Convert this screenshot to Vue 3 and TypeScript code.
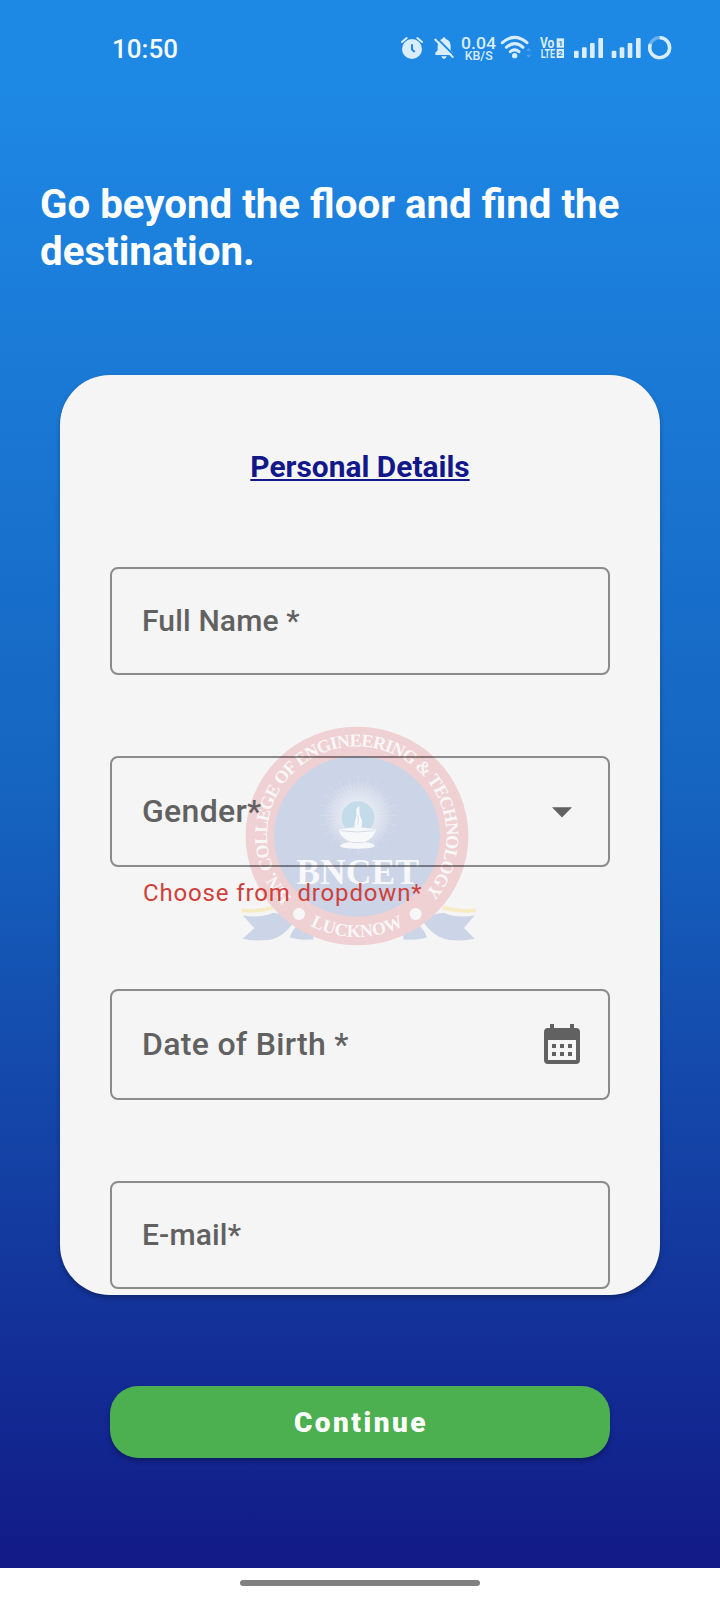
<script setup lang="ts">
interface Field {
  id: string
  label: string
  size: 'regular' | 'large'
  icon?: 'dropdown' | 'calendar'
  hint?: string
}

const fields: Field[] = [
  { id: 'name', label: 'Full Name *', size: 'regular' },
  { id: 'gender', label: 'Gender*', size: 'large', icon: 'dropdown', hint: 'Choose from dropdown*' },
  { id: 'birth', label: 'Date of Birth *', size: 'large', icon: 'calendar' },
  { id: 'email', label: 'E-mail*', size: 'regular' },
]

// Sunburst lines behind the lamp, alternating long and short.
const rays = Array.from({ length: 48 }, (_, i) => {
  const angle = (i / 48) * Math.PI * 2
  const outer = i % 2 ? 94 : 118
  return {
    x1: 415 + Math.cos(angle) * 52,
    y1: 346 + Math.sin(angle) * 52,
    x2: 415 + Math.cos(angle) * outer,
    y2: 346 + Math.sin(angle) * outer,
  }
})
</script>

<template>
  <div class="phone">
    <main class="screen">
      <header class="status">
        <span class="clock">10:50</span>
        <svg class="status-icons" viewBox="0 0 960 180" fill="#d9edff">
          <g>
            <circle cx="96" cy="87" r="30" />
            <path d="M66 66 L80 54 M126 66 L112 54" stroke="#d9edff" stroke-width="6" stroke-linecap="round" />
            <path d="M96 73 V88 L104 96" fill="none" stroke="#1e88e5" stroke-width="6" />
          </g>
          <g>
            <path d="M166 105 V98 L173 91 V78 Q173 60 187 57 Q187 52 192 52 Q197 52 197 57 Q212 61 212 78 V92 L219 99 V105 Z" />
            <path d="M184 109 H200 Q198 117 192 117 Q186 117 184 109Z" />
            <path d="M169 53 L225 109" stroke="#1e88e5" stroke-width="6" />
            <path d="M164 57 L220 113" stroke="#d9edff" stroke-width="6" />
          </g>
          <text x="243" y="87" class="speed" font-size="50" textLength="105" lengthAdjust="spacingAndGlyphs">0.04</text>
          <text x="254" y="121" class="speed" font-size="40" textLength="84" lengthAdjust="spacingAndGlyphs">KB/S</text>
          <g fill="none" stroke="#d9edff" stroke-width="9" stroke-linecap="round">
            <path d="M367 68 Q404 36 441 68" />
            <path d="M379 82 Q404 60 429 82" />
            <path d="M391 95 Q404 84 417 95" />
          </g>
          <circle cx="404" cy="107" r="8" />
          <path d="M438 93 L446 84 L454 93Z M438 104 L446 113 L454 104Z" opacity=".25" />
          <text x="480" y="84" class="volte" font-size="43" textLength="43" lengthAdjust="spacingAndGlyphs">Vo</text>
          <text x="482" y="115" class="volte" font-size="40" textLength="43" lengthAdjust="spacingAndGlyphs">LTE</text>
          <rect x="530" y="55" width="22" height="28" />
          <rect x="530" y="87" width="22" height="27" />
          <text x="535" y="78" class="sim" font-size="24">1</text>
          <text x="534" y="109" class="sim" font-size="24">2</text>
          <g>
            <rect x="582" y="92" width="14" height="22" rx="3" />
            <rect x="606" y="82" width="14" height="32" rx="3" />
            <rect x="630" y="69" width="14" height="45" rx="3" />
            <rect x="655" y="54" width="14" height="60" rx="3" />
            <rect x="695" y="92" width="14" height="22" rx="3" />
            <rect x="719" y="82" width="14" height="32" rx="3" />
            <rect x="743" y="69" width="14" height="45" rx="3" />
            <rect x="768" y="54" width="14" height="60" rx="3" />
          </g>
          <circle cx="839" cy="83" r="30" fill="none" stroke="#d9edff" stroke-width="10" opacity=".4" />
          <path d="M839 53 A30 30 0 1 1 811 72" fill="none" stroke="#d9edff" stroke-width="10" />
        </svg>
      </header>

      <h1 class="headline">Go beyond the floor and find the destination.</h1>

      <section class="card">
        <svg class="crest" viewBox="0 0 840 810">
          <defs>
            <path id="ring-top" d="M 215 593 A 269 269 0 1 1 612 586" />
            <path id="ring-bottom" d="M 210 635 A 303 303 0 0 0 612 635" />
            <radialGradient id="glow">
              <stop offset="0" stop-color="#fff" stop-opacity=".8" />
              <stop offset=".45" stop-color="#fff" stop-opacity=".45" />
              <stop offset="1" stop-color="#fff" stop-opacity="0" />
            </radialGradient>
          </defs>
          <g fill="#ccd5e7">
            <path d="M68 646 Q115 656 160 638 L232 650 Q190 722 130 721 Q95 723 68 716 L103 684 Z" />
            <path d="M764 646 Q715 656 670 638 L600 650 Q640 720 702 721 Q738 723 764 716 L732 684 Z" />
          </g>
          <g fill="#ccd5e7" stroke="#f4f4f4" stroke-width="4">
            <path d="M207 714 Q214 686 240 668 L282 690 V720 Q235 724 207 714Z" />
            <path d="M623 714 Q616 686 590 668 L548 690 V720 Q595 724 623 714Z" />
          </g>
          <path d="M64 631 Q110 636 160 623 M768 631 Q720 636 668 623" fill="none" stroke="#f7ebc4" stroke-width="11" />
          <ellipse cx="411" cy="408" rx="334" ry="328" fill="#efd0d3" />
          <ellipse cx="411" cy="409" rx="249" ry="241" fill="#ccd5e7" />
          <circle cx="415" cy="346" r="104" fill="url(#glow)" />
          <g stroke="#fff" stroke-width="1.5" opacity=".3">
            <line v-for="(r, i) in rays" :key="i" :x1="r.x1" :y1="r.y1" :x2="r.x2" :y2="r.y2" />
          </g>
          <circle cx="414" cy="353" r="49" fill="#c4dcea" />
          <g fill="#f7f8fa">
            <path d="M403 386 C403 360 412 350 409 335 C408 326 413 322 417 318 C420 332 416 342 423 355 C430 368 424 376 425 387 Z" />
            <path d="M356 389 Q412 374 468 389 Q462 416 431 427 Q460 428 465 438 Q458 446 412 446 Q366 446 359 438 Q366 428 394 427 Q362 414 356 389Z" />
          </g>
          <path d="M362 392 Q412 400 462 392 M413 374 Q418 355 413 345 M394 428 H431" fill="none" stroke="#ccd5e7" stroke-width="2.5" />
          <text x="229" y="552" class="crest-name" font-size="108" textLength="368" lengthAdjust="spacingAndGlyphs">BNCET</text>
          <text class="crest-ring" font-size="54">
            <textPath href="#ring-top" textLength="1236" lengthAdjust="spacing">B.N. COLLEGE OF ENGINEERING &amp; TECHNOLOGY</textPath>
          </text>
          <text class="crest-ring" font-size="54" text-anchor="middle">
            <textPath href="#ring-bottom" startOffset="50%">LUCKNOW</textPath>
          </text>
          <circle cx="237" cy="642" r="18" fill="#f8f7f8" />
          <circle cx="587" cy="642" r="18" fill="#f8f7f8" />
        </svg>

        <h2 class="title">Personal Details</h2>

        <div class="fields">
          <div v-for="f in fields" :key="f.id" class="field" :class="f.id">
            <div class="box" :class="f.size">
              <span class="label">{{ f.label }}</span>
              <svg v-if="f.icon === 'dropdown'" class="icon" viewBox="0 0 24 24"><path d="M7 9.6 L12 14.7 L17 9.6Z" /></svg>
              <svg v-if="f.icon === 'calendar'" class="icon" viewBox="0 0 48 48">
                <path
                  fill-rule="evenodd"
                  d="M12 3h4v4h16V3h4v4h2a4 4 0 0 1 4 4v28a4 4 0 0 1-4 4H10a4 4 0 0 1-4-4V11a4 4 0 0 1 4-4h2zM10 19v20h28V19zM14 23h4v4h-4zM22 23h4v4h-4zM30 23h4v4h-4zM14 31h4v4h-4zM22 31h4v4h-4zM30 31h4v4h-4z"
                />
              </svg>
            </div>
            <p v-if="f.hint" class="hint">{{ f.hint }}</p>
          </div>
        </div>
      </section>

      <button class="continue" type="button">Continue</button>
    </main>
    <footer class="navbar"><span class="handle"></span></footer>
  </div>
</template>

<style>
body {
  margin: 0;
}
</style>

<style scoped>
.phone {
  width: 720px;
  height: 1600px;
  display: flex;
  flex-direction: column;
  overflow: hidden;
  background: #fff;
  font-family: Roboto, 'Liberation Sans', sans-serif;
}
.screen {
  height: 1568px;
  display: flex;
  flex-direction: column;
  background: linear-gradient(#1e88e5 0%, #1e88e5 5%, #1565c0 50%, #121a87 100%);
}
.status {
  height: 60px;
  padding: 20px 20px 0 112px;
  display: flex;
  justify-content: space-between;
}
.clock {
  color: #f4faff;
  font-size: 26px;
  font-weight: 500;
  line-height: 58px;
}
.status-icons {
  width: 320px;
  height: 60px;
}
.speed {
  font-family: Roboto, sans-serif;
  font-weight: 500;
}
.volte {
  font-family: Roboto, sans-serif;
  font-weight: 700;
}
.sim {
  font-family: Roboto, sans-serif;
  font-weight: 700;
  fill: #1e88e5;
}
.headline {
  width: 620px;
  height: 94px;
  margin: 101px 0 0 40px;
  color: #fff;
  font-size: 40.25px;
  font-weight: 700;
  line-height: 47px;
}
.card {
  position: relative;
  box-sizing: border-box;
  width: 600px;
  height: 920px;
  margin: 100px auto 0;
  padding: 74px 50px 0;
  border-radius: 50px;
  background: #f5f5f5;
  box-shadow: 0 3px 5px rgba(0, 0, 0, 0.28);
}
.crest {
  position: absolute;
  left: 160px;
  top: 325px;
  width: 280px;
  height: 270px;
}
.crest-name {
  font-family: 'Liberation Serif', serif;
  font-weight: 700;
  fill: #f8f8fa;
}
.crest-ring {
  font-family: 'Liberation Serif', serif;
  font-weight: 700;
  fill: #f8f7f8;
}
.title {
  position: relative;
  margin: 0;
  height: 118px;
  color: #12178a;
  font-size: 29.9px;
  font-weight: 700;
  line-height: 36px;
  text-align: center;
  text-decoration: underline;
  text-decoration-thickness: 2px;
  text-underline-offset: 2px;
  text-decoration-skip-ink: none;
}
.fields {
  position: relative;
  display: flex;
  flex-direction: column;
}
.name {
  height: 189px;
}
.gender {
  height: 233px;
}
.birth {
  height: 192px;
}
.box {
  box-sizing: border-box;
  height: 108px;
  padding: 0 22px 0 30px;
  display: flex;
  align-items: center;
  justify-content: space-between;
  border: 2px solid rgba(0, 0, 0, 0.43);
  border-radius: 8px;
  color: #616161;
  font-size: 30px;
  font-weight: 500;
  letter-spacing: 0.15px;
}
.box.large {
  height: 111px;
  font-size: 32px;
  letter-spacing: 0.3px;
}
.label {
  padding-bottom: 2px;
}
.icon {
  width: 48px;
  height: 48px;
  fill: #616161;
}
.hint {
  margin: 11px 0 0 33px;
  color: #d0403a;
  font-size: 24px;
  letter-spacing: 0.85px;
  line-height: 30px;
}
.continue {
  width: 500px;
  height: 72px;
  margin: 91px auto 0;
  padding: 1px 0 0 2px;
  border: 0;
  border-radius: 28px;
  background: #4caf50;
  color: #fff;
  font-family: inherit;
  font-size: 28px;
  font-weight: 900;
  letter-spacing: 2.5px;
  box-shadow: 0 3px 5px rgba(0, 0, 0, 0.3);
}
.navbar {
  height: 32px;
  display: flex;
  justify-content: center;
  align-items: flex-start;
}
.handle {
  width: 240px;
  height: 6px;
  margin-top: 12px;
  border-radius: 3px;
  background: #808080;
}
</style>
